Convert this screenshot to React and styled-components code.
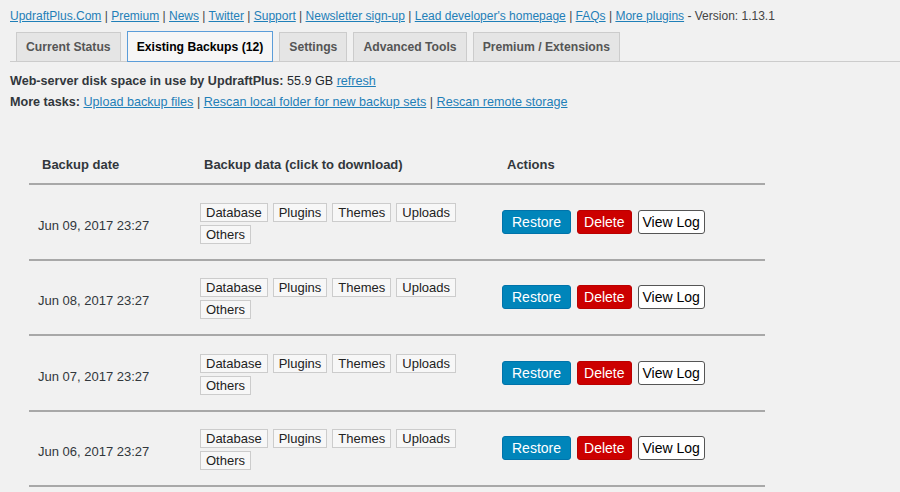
import React from "react";
import styled, { createGlobalStyle } from "styled-components";

const GlobalStyle = createGlobalStyle`
  html, body {
    margin: 0;
    padding: 0;
    background: #f1f1f1;
  }
  body {
    font-family: "Liberation Sans", Arial, sans-serif;
    font-size: 13px;
    color: #23282d;
  }
`;

const links = [
  "UpdraftPlus.Com",
  "Premium",
  "News",
  "Twitter",
  "Support",
  "Newsletter sign-up",
  "Lead developer's homepage",
  "FAQs",
  "More plugins",
];

const tabs = [
  "Current Status",
  "Existing Backups (12)",
  "Settings",
  "Advanced Tools",
  "Premium / Extensions",
];

const backups = [
  "Jun 09, 2017 23:27",
  "Jun 08, 2017 23:27",
  "Jun 07, 2017 23:27",
  "Jun 06, 2017 23:27",
];

const entities = ["Database", "Plugins", "Themes", "Uploads", "Others"];

const App = () => {
  return (
    <Page>
      <GlobalStyle />
      <TopLinks>
        {links.map((l, i) => (
          <React.Fragment key={i}>
            {i > 0 && <Sep> | </Sep>}
            <A href="#">{l}</A>
          </React.Fragment>
        ))}
        <Sep> - Version: 1.13.1</Sep>
      </TopLinks>

      <TabBar>
        {tabs.map((t, i) => (
          <Tab key={i} active={i === 1}>
            {t}
          </Tab>
        ))}
      </TabBar>

      <Info>
        <InfoLine>
          <b>Web-server disk space in use by UpdraftPlus:</b> 55.9 GB{" "}
          <A href="#">refresh</A>
        </InfoLine>
        <InfoLine>
          <b>More tasks:</b> <A href="#">Upload backup files</A>
          <Sep> | </Sep>
          <A href="#">Rescan local folder for new backup sets</A>
          <Sep> | </Sep>
          <A href="#">Rescan remote storage</A>
        </InfoLine>
      </Info>

      <Table>
        <HeadRow>
          <HeadCell>Backup date</HeadCell>
          <HeadCell>Backup data (click to download)</HeadCell>
          <HeadCell>Actions</HeadCell>
        </HeadRow>
        {backups.map((date, i) => (
          <Row key={i}>
            <DateCell>{date}</DateCell>
            <DataCell>
              {entities.map((e) => (
                <EntityButton key={e}>{e}</EntityButton>
              ))}
            </DataCell>
            <ActionCell>
              <ActionButton variant="restore">Restore</ActionButton>
              <ActionButton variant="delete">Delete</ActionButton>
              <ActionButton variant="log">View Log</ActionButton>
            </ActionCell>
          </Row>
        ))}
      </Table>
    </Page>
  );
};

export default App;

const Page = styled.div`
  padding: 8px 0 0 10px;
  height: 484px;
  overflow: hidden;
`;

const TopLinks = styled.div`
  font-size: 12px;
  line-height: 16px;
  white-space: nowrap;
`;

const A = styled.a`
  color: #1f7fb8;
  text-decoration: underline;
`;

const Sep = styled.span`
  color: #444;
`;

const TabBar = styled.div`
  display: flex;
  gap: 6px;
  margin-top: 7px;
  padding-left: 6px;
  border-bottom: 1px solid #ccc;
  align-items: flex-end;
`;

const Tab = styled.div`
  padding: 4px 9px;
  line-height: 20px;
  font-weight: bold;
  font-size: 12.2px;
  margin-bottom: -1px;
  border: 1px solid ${({ active }) => (active ? "#5b9dd9" : "#ccc")};
  background: ${({ active }) => (active ? "#f6f6f6" : "#e5e5e5")};
  color: ${({ active }) => (active ? "#000" : "#555")};
  ${({ active }) => active && "padding-top: 5px;"}
`;

const Info = styled.div`
  margin-top: 9px;
  font-size: 12.6px;
`;

const InfoLine = styled.div`
  line-height: 21px;
  color: #23282d;
  b {
    color: #32373c;
  }
`;

const Table = styled.div`
  margin: 33px 0 0 19px;
  width: 736px;
`;

const HeadRow = styled.div`
  display: grid;
  grid-template-columns: 162px 302px 1fr;
  height: 37px;
  align-items: center;
  border-bottom: 2px solid #a8a8a8;
`;

const HeadCell = styled.div`
  font-weight: bold;
  padding-left: 13px;
  color: #32373c;
  &:last-child {
    padding-left: 14px;
  }
`;

const Row = styled.div`
  display: grid;
  grid-template-columns: 162px 302px 1fr;
  height: 73.5px;
  align-items: center;
  border-bottom: 2px solid #a8a8a8;
`;

const DateCell = styled.div`
  padding: 7px 0 0 9px;
  color: #32373c;
`;

const DataCell = styled.div`
  padding-left: 9px;
  padding-top: 3px;
  display: flex;
  flex-wrap: wrap;
  column-gap: 5px;
  row-gap: 3px;
`;

const EntityButton = styled.span`
  display: inline-block;
  height: 19px;
  line-height: 17px;
  padding: 0 5px;
  border: 1px solid #ccc;
  background: #f7f7f7;
  color: #222;
  box-sizing: border-box;
`;

const variants = {
  restore: { bg: "#0085ba", border: "#0073aa", color: "#fff", pad: "9px" },
  delete: { bg: "#cc0000", border: "#bb0000", color: "#fff", pad: "6px" },
  log: { bg: "#fff", border: "#555", color: "#000", pad: "4px" },
};

const ActionCell = styled.div`
  padding-left: 9px;
  display: flex;
  gap: 6px;
  align-items: center;
`;

const ActionButton = styled.button`
  font-family: "Liberation Sans", Arial, sans-serif;
  font-size: 14px;
  height: 24px;
  line-height: 22px;
  padding: 0 ${({ variant }) => variants[variant].pad};
  border: 1px solid ${({ variant }) => variants[variant].border};
  border-radius: 3px;
  background: ${({ variant }) => variants[variant].bg};
  color: ${({ variant }) => variants[variant].color};
  box-sizing: border-box;
`;
